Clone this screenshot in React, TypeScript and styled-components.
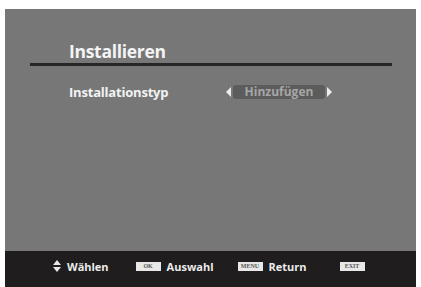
import React from 'react'
import styled, { createGlobalStyle } from 'styled-components'

const GlobalStyle = createGlobalStyle`
  html, body {
    margin: 0;
    padding: 0;
    background: #ffffff;
  }
  body {
    font-family: 'Open Sans', 'DejaVu Sans', sans-serif;
  }
`

const Screen = styled.div`
  width: 421px;
  height: 287px;
  padding: 9px 5px 0 5px;
  box-sizing: border-box;
  display: flex;
  flex-direction: column;
`

const Panel = styled.div`
  flex: 1;
  background: #777777;
  display: flex;
  flex-direction: column;
`

const Content = styled.div`
  flex: 1;
  padding: 31px 0 0 25px;
  width: 362px;
`

const Title = styled.div`
  padding-left: 39px;
  color: #f4f4f4;
  font-size: 17.5px;
  font-weight: 700;
  line-height: 22px;
  letter-spacing: -0.3px;
`

const Rule = styled.div`
  height: 3px;
  background: #262626;
  margin-top: 1px;
`

const Row = styled.div`
  display: flex;
  align-items: center;
  padding-left: 39px;
  margin-top: 16px;
  height: 20px;
`

const Label = styled.div`
  width: 157px;
  color: #f2f2f2;
  font-size: 13px;
  font-weight: 700;
  letter-spacing: -0.2px;
`

const Selector = styled.div`
  display: flex;
  align-items: center;
  gap: 2px;
`

const Arrow = styled.div<{ dir: 'left' | 'right' }>`
  width: 0;
  height: 0;
  border-top: 5px solid transparent;
  border-bottom: 5px solid transparent;
  ${({ dir }) =>
    dir === 'left' ? 'border-right: 5px solid #ededed;' : 'border-left: 5px solid #ededed;'}
`

const Value = styled.div`
  width: 92px;
  height: 14px;
  border-radius: 3px;
  background: #5c5c5c;
  color: #a6a6a6;
  font-size: 12px;
  font-weight: 700;
  line-height: 14px;
  text-align: center;
`

const Footer = styled.div`
  height: 36px;
  background: #1f1d1d;
  display: flex;
  align-items: center;
  padding: 0 0 6px 48px;
  box-sizing: border-box;
`

const Hint = styled.div<{ gap: number }>`
  display: flex;
  align-items: center;
  margin-right: ${({ gap }) => gap}px;
  color: #ececec;
  font-size: 11px;
  font-weight: 700;
`

const Key = styled.span`
  display: inline-block;
  width: 25px;
  height: 9px;
  background: #e8e8e8;
  color: #555;
  font-family: 'Liberation Serif', serif;
  font-size: 6px;
  line-height: 9px;
  text-align: center;
  margin-right: 6px;
`

const UpDown = () => (
  <svg width="8" height="12" viewBox="0 0 8 12" style={{ marginRight: 6 }}>
    <path d="M4 0 L8 5 L0 5 Z" fill="#e8e8e8" />
    <path d="M0 7 L8 7 L4 12 Z" fill="#e8e8e8" />
  </svg>
)

export default function App() {
  return (
    <>
      <GlobalStyle />
      <Screen>
        <Panel>
          <Content>
            <Title>Installieren</Title>
            <Rule />
            <Row>
              <Label>Installationstyp</Label>
              <Selector>
                <Arrow dir="left" />
                <Value>Hinzufügen</Value>
                <Arrow dir="right" />
              </Selector>
            </Row>
          </Content>
          <Footer>
            <Hint gap={27}>
              <UpDown />
              Wählen
            </Hint>
            <Hint gap={24}>
              <Key>OK</Key>
              Auswahl
            </Hint>
            <Hint gap={33}>
              <Key>MENU</Key>
              Return
            </Hint>
            <Hint gap={0}>
              <Key>EXIT</Key>
            </Hint>
          </Footer>
        </Panel>
      </Screen>
    </>
  )
}
